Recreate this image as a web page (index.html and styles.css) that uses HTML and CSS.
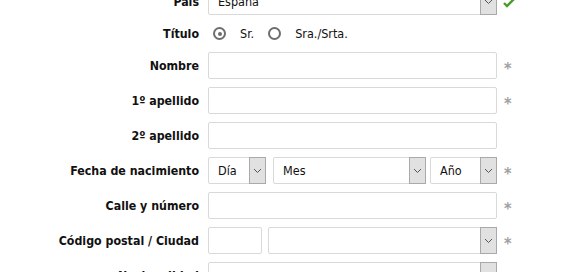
FILE: index.html
```html
<!DOCTYPE html>
<html lang="es">
<head>
  <meta charset="UTF-8">
  <title>Datos personales</title>
  <link rel="stylesheet" href="styles.css">
</head>
<body>
  <form class="form">
    <div class="row">
      <label class="label">País</label>
      <div class="select wide"><span class="value">España</span><span class="arrow"><svg width="9" height="6" viewBox="0 0 9 6"><path d="M1 1l3.5 3.5L8 1" fill="none" stroke="#555" stroke-width="1"/></svg></span></div>
      <span class="ok"><svg width="12" height="10" viewBox="0 0 12 10"><path d="M1 5l3 3 7-7" fill="none" stroke="#4b9a2e" stroke-width="2.4"/></svg></span>
    </div>
    <div class="row short">
      <label class="label">Título</label>
      <div class="radios">
        <span class="radio checked"></span><span class="opt">Sr.</span>
        <span class="radio"></span><span class="opt">Sra./Srta.</span>
      </div>
    </div>
    <div class="row">
      <label class="label">Nombre</label>
      <div class="input"></div>
      <span class="req">*</span>
    </div>
    <div class="row">
      <label class="label">1º apellido</label>
      <div class="input"></div>
      <span class="req">*</span>
    </div>
    <div class="row">
      <label class="label">2º apellido</label>
      <div class="input"></div>
    </div>
    <div class="row">
      <label class="label">Fecha de nacimiento</label>
      <div class="group">
        <div class="select day"><span class="value">Día</span><span class="arrow"><svg width="9" height="6" viewBox="0 0 9 6"><path d="M1 1l3.5 3.5L8 1" fill="none" stroke="#555" stroke-width="1"/></svg></span></div>
        <div class="select month"><span class="value">Mes</span><span class="arrow"><svg width="9" height="6" viewBox="0 0 9 6"><path d="M1 1l3.5 3.5L8 1" fill="none" stroke="#555" stroke-width="1"/></svg></span></div>
        <div class="select year"><span class="value">Año</span><span class="arrow"><svg width="9" height="6" viewBox="0 0 9 6"><path d="M1 1l3.5 3.5L8 1" fill="none" stroke="#555" stroke-width="1"/></svg></span></div>
      </div>
      <span class="req">*</span>
    </div>
    <div class="row">
      <label class="label">Calle y número</label>
      <div class="input"></div>
      <span class="req">*</span>
    </div>
    <div class="row">
      <label class="label">Código postal / Ciudad</label>
      <div class="group city">
        <div class="input zip"></div>
        <div class="select town"><span class="value"></span><span class="arrow"><svg width="9" height="6" viewBox="0 0 9 6"><path d="M1 1l3.5 3.5L8 1" fill="none" stroke="#555" stroke-width="1"/></svg></span></div>
      </div>
      <span class="req">*</span>
    </div>
    <div class="row">
      <label class="label">Nacionalidad</label>
      <div class="select wide"><span class="value"></span><span class="arrow"><svg width="9" height="6" viewBox="0 0 9 6"><path d="M1 1l3.5 3.5L8 1" fill="none" stroke="#555" stroke-width="1"/></svg></span></div>
      <span class="req">*</span>
    </div>
  </form>
</body>
</html>
```
FILE: styles.css
```css
body {
  margin: 0;
  background: #fff;
  font-family: "DejaVu Sans Condensed", "DejaVu Sans", sans-serif;
  font-size: 12.5px;
  color: #111;
}

.form {
  margin-top: -12px;
  display: flex;
  flex-direction: column;
  gap: 8px;
}

.row {
  display: grid;
  grid-template-columns: 199px 289px auto;
  column-gap: 9px;
  align-items: center;
  height: 27px;
}

.row.short {
  height: 21px;
}

.label {
  text-align: right;
  font-weight: bold;
  font-size: 12.3px;
}

.input,
.select {
  box-sizing: border-box;
  height: 27px;
  border: 1px solid #d9d9d9;
  border-radius: 2px;
  background: #fff;
}

.select {
  display: flex;
  align-items: stretch;
}

.select .value {
  flex: 1;
  padding-left: 9px;
  line-height: 26px;
}

.select .arrow {
  width: 15px;
  margin: -1px -1px -1px 0;
  border: 1px solid #a9a9a9;
  background: #e1e1e1;
  display: flex;
  align-items: center;
  justify-content: center;
}

.group {
  display: flex;
  gap: 7px;
}

.group .day {
  width: 58px;
}

.group .month {
  width: 153px;
  margin-right: -3px;
}

.group .year {
  width: 67px;
}

.group.city {
  gap: 6px;
}

.group .zip {
  width: 54px;
}

.group .town {
  flex: 1;
}

.radios {
  display: flex;
  align-items: center;
}

.radio {
  box-sizing: border-box;
  width: 13px;
  height: 13px;
  border: 2px solid #6d6d6d;
  border-radius: 50%;
  margin: 0 14px 0 5px;
  position: relative;
}

.radio.checked::after {
  content: "";
  position: absolute;
  left: 2.5px;
  top: 2.5px;
  width: 4px;
  height: 4px;
  border-radius: 50%;
  background: #6d6d6d;
}

.opt {
  margin-right: 9px;
}

.req {
  color: #a0a0a0;
  font-size: 16px;
  font-weight: bold;
  padding-top: 6px;
  margin-left: -2px;
}

.ok {
  display: flex;
  margin-top: 3px;
  margin-left: -3px;
}
```
